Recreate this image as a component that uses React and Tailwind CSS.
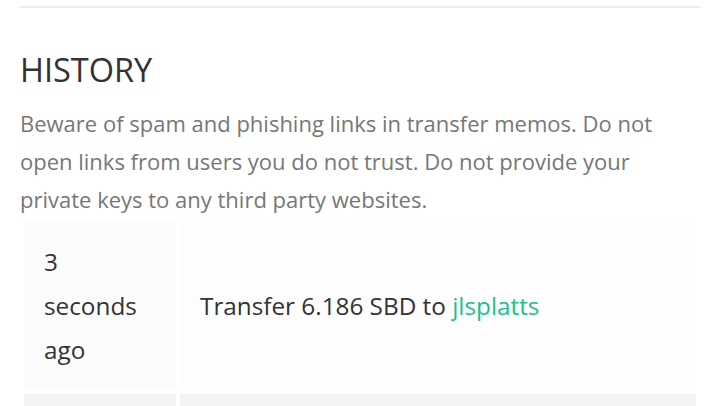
import React from 'react';

export default function App() {
    return (
        <div className="w-[720px] h-[406px] overflow-hidden bg-white px-5 font-['Open_Sans',sans-serif]">
            <div className="h-[6px]" />
            <hr className="border-0 h-[2px] bg-[#eeeeee]" />
            <h2 className="mt-[42px] text-[32.5px] leading-[40px] text-[#333333]">HISTORY</h2>
            <p className="mt-[14px] text-[22px] leading-[38px] text-[#777777]">
                Beware of spam and phishing links in transfer memos. Do not open links from users you do not trust. Do not provide your private keys to any third party websites.
            </p>
            <table className="w-[680px] border-separate border-spacing-[4px] text-[24.3px] leading-[44px] text-[#333333]">
                <tbody>
                    <tr>
                        <td className="w-[152px] pl-5 pr-8 pt-[18px] pb-[18px] bg-[#fcfcfc] align-middle">3 seconds ago</td>
                        <td className="px-5 pt-[18px] pb-[18px] bg-[#fdfdfd] align-middle">
                            Transfer 6.186 SBD to <a className="text-[#1fbf8f]">jlsplatts</a>
                        </td>
                    </tr>
                    <tr>
                        <td className="pl-5 pr-8 py-[19px] bg-[#f4f4f4]">&nbsp;</td>
                        <td className="px-5 py-[19px] bg-[#f4f4f4]">&nbsp;</td>
                    </tr>
                </tbody>
            </table>
        </div>
    );
}
